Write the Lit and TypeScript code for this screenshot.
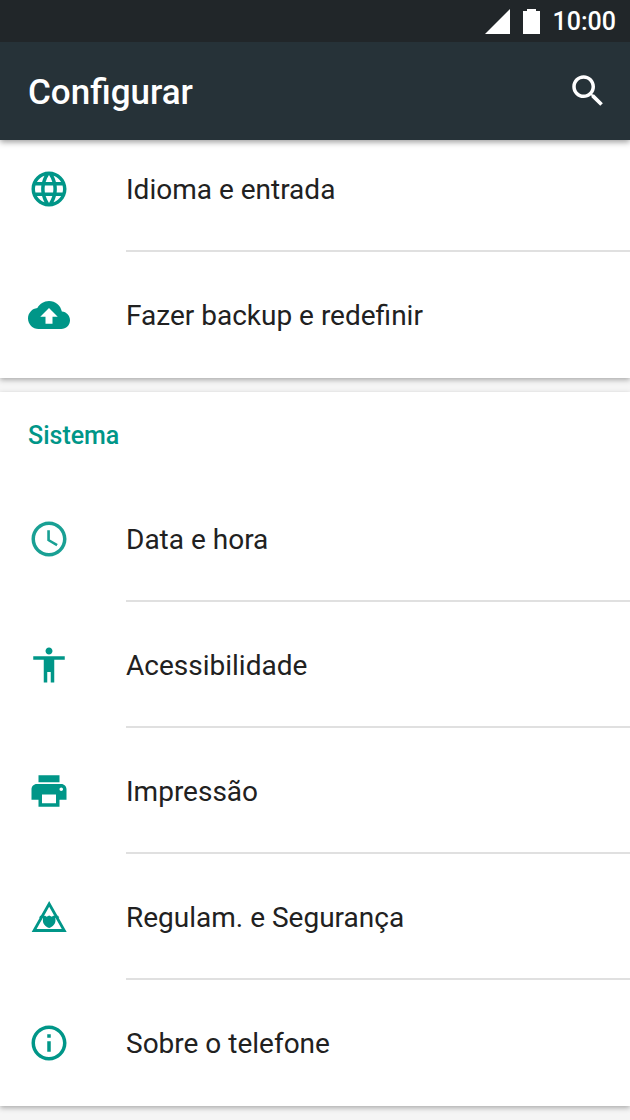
import { LitElement, html, css, svg } from "lit";
import { customElement } from "lit/decorators.js";

const icons = {
  language: svg`<path d="M11.99 2C6.47 2 2 6.48 2 12s4.47 10 9.99 10C17.52 22 22 17.52 22 12S17.52 2 11.99 2zm6.93 6h-2.95c-.32-1.25-.78-2.45-1.38-3.56 1.84.63 3.37 1.91 4.33 3.56zM12 4.04c.83 1.2 1.48 2.53 1.91 3.96h-3.82c.43-1.43 1.08-2.76 1.91-3.96zM4.26 14C4.1 13.36 4 12.69 4 12s.1-1.36.26-2h3.38c-.08.66-.14 1.32-.14 2 0 .68.06 1.34.14 2H4.26zm.82 2h2.95c.32 1.25.78 2.45 1.38 3.56-1.84-.63-3.37-1.9-4.33-3.56zm2.95-8H5.08c.96-1.66 2.49-2.93 4.33-3.56C8.81 5.55 8.35 6.75 8.03 8zM12 19.96c-.83-1.2-1.48-2.53-1.91-3.96h3.82c-.43 1.43-1.08 2.76-1.91 3.96zM14.34 14H9.66c-.09-.66-.16-1.32-.16-2 0-.68.07-1.35.16-2h4.68c.09.65.16 1.32.16 2 0 .68-.07 1.34-.16 2zm.25 5.56c.6-1.11 1.06-2.31 1.38-3.56h2.95c-.96 1.65-2.49 2.93-4.33 3.56zM16.36 14c.08-.66.14-1.32.14-2 0-.68-.06-1.34-.14-2h3.38c.16.64.26 1.31.26 2s-.1 1.36-.26 2h-3.38z"/>`,
  backup: svg`<path d="M19.35 10.04C18.67 6.59 15.64 4 12 4 9.11 4 6.6 5.64 5.35 8.04 2.34 8.36 0 10.91 0 14c0 3.31 2.69 6 6 6h13c2.76 0 5-2.24 5-5 0-2.64-2.05-4.78-4.65-4.96zM14 13v4h-4v-4H7l5-5 5 5h-3z"/>`,
  clock: svg`<path opacity=".9" d="M11.99 2C6.47 2 2 6.48 2 12s4.47 10 9.99 10C17.52 22 22 17.52 22 12S17.52 2 11.99 2zM12 20c-4.42 0-8-3.58-8-8s3.58-8 8-8 8 3.58 8 8-3.58 8-8 8zm.5-13H11v6l5.25 3.15.75-1.23-4.5-2.67z"/>`,
  accessibility: svg`<path d="M12 2c1.1 0 2 .9 2 2s-.9 2-2 2-2-.9-2-2 .9-2 2-2zm9 7h-6v13h-2v-6h-2v6H9V9H3V7h18v2z"/>`,
  print: svg`<path d="M19 8H5c-1.66 0-3 1.34-3 3v6h4v4h12v-4h4v-6c0-1.66-1.34-3-3-3zm-3 11H8v-5h8v5zm3-7c-.55 0-1-.45-1-1s.45-1 1-1 1 .45 1 1-.45 1-1 1zm-1-9H6v4h12V3z"/>`,
  safety: svg`<path fill-rule="evenodd" d="M12.100 2.800L2.100 20.500h20zM12.100 6.100L19.300 18.900H4.900z"/><path d="M7 11.300h2.800l.8.500 1.500-.7 1.500.7.800-.5h2.800l.7 1.100h-2.300c.1.400.1.900.1 1.400 0 2.200-1.500 3.700-3.600 4.500-2.100-.8-3.600-2.300-3.600-4.500 0-.5 0-1 .1-1.400H6.300z"/>`,
  info: svg`<path d="M11 17h2v-6h-2v6zm1-15C6.480 2 2 6.480 2 12s4.480 10 10 10 10-4.480 10-10S17.520 2 12 2zm0 18c-4.410 0-8-3.590-8-8s3.590-8 8-8 8 3.590 8 8-3.590 8-8 8zM11 9h2V7h-2v2z"/>`,
  search: svg`<path d="M15.500 14h-.79l-.28-.27C15.410 12.590 16 11.110 16 9.500 16 5.910 13.090 3 9.500 3S3 5.910 3 9.500 5.910 16 9.500 16c1.610 0 3.090-.59 4.230-1.570l.27.28v.79l5 4.990L20.490 19l-4.990-5zm-6 0C7.010 14 5 11.990 5 9.500S7.010 5 9.500 5 14 7.010 14 9.500 11.990 14 9.500 14z"/>`,
};

type IconName = keyof typeof icons;
type Item = { icon: IconName; label: string };

const personal: Item[] = [
  { icon: "language", label: "Idioma e entrada" },
  { icon: "backup", label: "Fazer backup e redefinir" },
];

const system: Item[] = [
  { icon: "clock", label: "Data e hora" },
  { icon: "accessibility", label: "Acessibilidade" },
  { icon: "print", label: "Impressão" },
  { icon: "safety", label: "Regulam. e Segurança" },
  { icon: "info", label: "Sobre o telefone" },
];

const icon = (name: IconName) =>
  html`<svg class="icon" viewBox="0 0 24 24" aria-hidden="true">${icons[name]}</svg>`;

@customElement("app-root")
export class AppRoot extends LitElement {
  static styles = css`
    :host {
      display: flex;
      flex-direction: column;
      min-height: 100vh;
      background: #f5f5f5;
      color: #212121;
      font-family: Roboto, "Noto Sans", sans-serif;
    }
    .top {
      position: relative;
      z-index: 1;
      color: #fff;
      background: #263238;
      box-shadow: 0 2px 6px rgba(0, 0, 0, 0.4);
    }
    .status {
      display: flex;
      align-items: center;
      justify-content: flex-end;
      gap: 13px;
      height: 42px;
      padding: 0 14px;
      background: #212629;
      font-size: 25px;
      line-height: 40px;
      font-weight: 500;
    }
    .status time {
      padding-top: 2px;
    }
    .signal {
      width: 25px;
      height: 25px;
    }
    .battery {
      width: 17px;
      height: 25px;
    }
    .bar {
      display: flex;
      align-items: center;
      justify-content: space-between;
      height: 98px;
      padding: 0 21px 0 28px;
    }
    h1 {
      margin: 0;
      padding-top: 4px;
      font-size: 35px;
      line-height: 42px;
      font-weight: 500;
    }
    .icon {
      display: block;
      flex: none;
      width: 42px;
      height: 42px;
      fill: currentColor;
    }
    .search {
      padding: 0;
      border: 0;
      background: none;
      color: inherit;
      cursor: pointer;
    }
    main {
      display: flex;
      flex-direction: column;
      gap: 14px;
      margin-top: -14px;
      padding-bottom: 14px;
    }
    .card {
      background: #fff;
      box-shadow: 0 2px 5px rgba(0, 0, 0, 0.3);
    }
    h2 {
      margin: 0;
      padding: 4px 28px 0;
      color: #009688;
      font-size: 25px;
      line-height: 80px;
      font-weight: 500;
    }
    ul {
      margin: 0;
      padding: 0;
      list-style: none;
    }
    .row {
      display: flex;
      align-items: center;
      gap: 56px;
      padding-left: 28px;
      color: #009688;
      text-decoration: none;
    }
    .label {
      flex: 1;
      box-sizing: border-box;
      height: 126px;
      padding-top: 4px;
      border-bottom: 2px solid #e0e0e0;
      color: #212121;
      font-size: 28px;
      line-height: 120px;
    }
    li:last-child .label {
      border-bottom-color: transparent;
    }
  `;

  private list(items: Item[]) {
    return html`<ul>
      ${items.map(
        (item) => html`<li>
          <a class="row" href="#">${icon(item.icon)}<span class="label">${item.label}</span></a>
        </li>`,
      )}
    </ul>`;
  }

  render() {
    return html`
      <header class="top">
        <div class="status">
          <svg class="signal" viewBox="0 0 25 25" aria-hidden="true"><path d="M25 0v25H0z" fill="#fff" /></svg>
          <svg class="battery" viewBox="0 0 17 25" aria-hidden="true"><path d="M4 0h9v2h4v23H0V2h4z" fill="#fff" /></svg>
          <time>10:00</time>
        </div>
        <div class="bar">
          <h1>Configurar</h1>
          <button class="search" type="button" aria-label="Pesquisar">${icon("search")}</button>
        </div>
      </header>
      <main>
        <section class="card">${this.list(personal)}</section>
        <section class="card">
          <h2>Sistema</h2>
          ${this.list(system)}
        </section>
      </main>
    `;
  }
}
